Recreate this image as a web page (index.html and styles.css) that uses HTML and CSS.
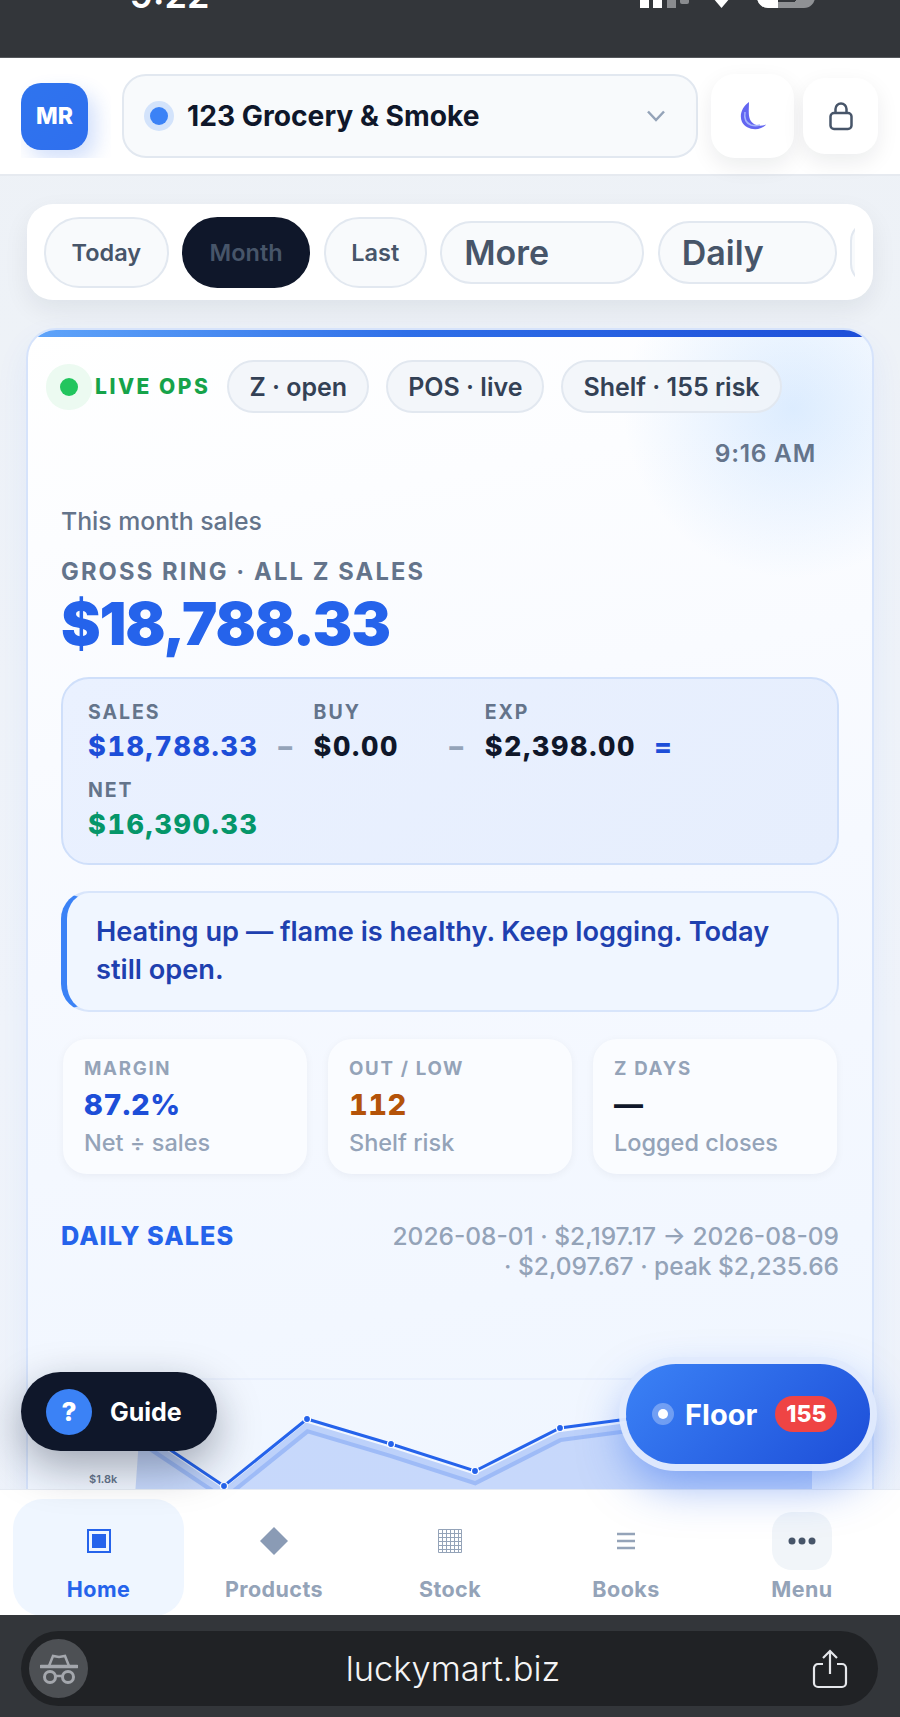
FILE: index.html
```html
<!DOCTYPE html>
<html lang="en">
<head>
    <meta charset="utf-8">
    <title>LuckyMart</title>
    <link rel="stylesheet" href="styles.css">
</head>
<body>
<div class="page">
    <div class="status">
        <div class="status-row">
            <span class="status-time">9:22</span>
            <svg class="status-icons" width="185" height="38" viewBox="0 0 185 38">
                <rect x="0" y="20" width="9" height="30" rx="2" fill="#fff"/>
                <rect x="13" y="14" width="9" height="30" rx="2" fill="#fff"/>
                <rect x="27" y="10" width="9" height="30" rx="2" fill="#8a8c8f"/>
                <rect x="40" y="4" width="9" height="30" rx="2" fill="#8a8c8f"/>
                <path d="M73 28h17l-8.500 10z" fill="#fff"/>
                <rect x="117" y="-8" width="58" height="46" rx="11" fill="#8f9194"/>
                <path d="M128 -8h10v46h-10a11 11 0 0 1-11-11v-24a11 11 0 0 1 11-11z" fill="#fff"/>
                <path d="M138 31h17M155 20v11M138 20h30" stroke="#33363a" stroke-width="2" fill="none"/>
            </svg>
        </div>
    </div>

    <header class="topbar">
        <div class="avatar-wrap"><div class="avatar">MR</div></div>
        <div class="store">
            <span class="store-dot"></span>
            <span class="store-name">123 Grocery &amp; Smoke</span>
            <svg class="store-caret" width="20" height="12" viewBox="0 0 20 12"><path d="M2 1.500l8 8.500 8-8.500" fill="none" stroke="#94a3b8" stroke-width="2.500"/></svg>
        </div>
        <div class="round-btn moon-btn">
            <svg width="32" height="32" viewBox="0 0 32 32">
                <path d="M12 2C5 7 2 15 5 22c3 6 12 9 19 6 2-.8 4-2 5-3.500-6 2.500-13 1-16-5-2-5-1-12-1-17.500z" fill="#6366f1"/>
                <path d="M8 12c-1 6 1 11 6 13 3 1 6 1 9 0" fill="none" stroke="#a5b4fc" stroke-width="1.500"/>
            </svg>
        </div>
        <div class="round-btn lock-btn">
            <svg width="26" height="30" viewBox="0 0 26 30">
                <rect x="2.500" y="12" width="21" height="16" rx="3.500" fill="none" stroke="#475569" stroke-width="2.500"/>
                <path d="M7.500 12V8a5.500 5.500 0 0 1 11 0v4" fill="none" stroke="#475569" stroke-width="2.500"/>
            </svg>
        </div>
    </header>

    <main class="content">
        <div class="periods">
            <nav class="period-track">
                <a class="period">Today</a>
                <a class="period period-on">Month</a>
                <a class="period">Last</a>
                <a class="period period-big period-more">More</a>
                <a class="period period-big period-daily">Daily</a>
                <a class="period period-cut"></a>
            </nav>
        </div>

        <section class="card">
            <div class="ops">
                <span class="live-dot"></span>
                <span class="live-text">LIVE OPS</span>
                <span class="chip">Z · open</span>
                <span class="chip">POS · live</span>
                <span class="chip">Shelf · 155 risk</span>
                <span class="ops-time">9:16 AM</span>
            </div>

            <p class="period-label">This month sales</p>
            <p class="gross-label">GROSS RING · ALL Z SALES</p>
            <p class="gross-value">$18,788.33</p>

            <div class="formula">
                <div class="term term-sales"><span class="term-label">SALES</span><b class="c-blue">$18,788.33</b></div>
                <span class="op">−</span>
                <div class="term term-buy"><span class="term-label">BUY</span><b>$0.00</b></div>
                <span class="op">−</span>
                <div class="term"><span class="term-label">EXP</span><b>$2,398.00</b></div>
                <span class="op c-blue">=</span>
                <div class="term term-sales"><span class="term-label">NET</span><b class="c-green">$16,390.33</b></div>
            </div>

            <div class="note">Heating up — flame is healthy. Keep logging. Today still open.</div>

            <div class="stats">
                <div class="stat"><span class="stat-label">MARGIN</span><b class="c-blue">87.2%</b><span class="stat-sub">Net ÷ sales</span></div>
                <div class="stat"><span class="stat-label">OUT / LOW</span><b class="c-amber">112</b><span class="stat-sub">Shelf risk</span></div>
                <div class="stat"><span class="stat-label">Z DAYS</span><b>—</b><span class="stat-sub">Logged closes</span></div>
            </div>

            <div class="chart-head">
                <h3>DAILY SALES</h3>
                <p>2026-08-01 · $2,197.17 → 2026-08-09 · $2,097.67 · peak $2,235.66</p>
            </div>

            <svg class="chart" width="778" height="240" viewBox="0 0 778 240">
                <path d="M0 95H778" stroke="#e6eefc" stroke-width="1.500"/>
                <polygon points="72,240 78,155 163,212 246,145 330,170 414,197 499,154 582,143 666,125 751,150 751,240" fill="#2563eb" opacity=".2"/>
                <polyline points="78,154 163,211 246,144 330,169 414,196 499,153 582,142 666,124 751,149" fill="none" stroke="#2563eb" stroke-width="10" opacity=".25"/>
                <polyline points="78,145 163,202 246,135 330,160 414,187 499,144 582,133 666,115 751,140" fill="none" stroke="#2563eb" stroke-width="3"/>
                <g fill="#2563eb" stroke="#fff" stroke-width="1.200">
                    <circle cx="163" cy="202" r="3.500"/>
                    <circle cx="246" cy="135" r="3.500"/>
                    <circle cx="330" cy="160" r="3.500"/>
                    <circle cx="414" cy="187" r="3.500"/>
                    <circle cx="499" cy="144" r="3.500"/>
                </g>
                <text class="axis" x="28" y="199">$1.8k</text>
            </svg>
        </section>
    </main>

    <a class="guide"><span class="guide-mark">?</span>Guide</a>
    <a class="floor"><span class="floor-dot"></span>Floor<span class="floor-badge">155</span></a>

    <footer class="tabs">
        <a class="tab tab-on">
            <span class="tab-icon"><svg width="24" height="24" viewBox="0 0 24 24"><rect x="1" y="1" width="22" height="22" fill="none" stroke="#2563eb" stroke-width="2"/><rect x="5" y="5" width="14" height="14" fill="#2563eb"/></svg></span>
            Home
        </a>
        <a class="tab">
            <span class="tab-icon"><svg width="30" height="28" viewBox="0 0 30 28"><path d="M15 0l14 14-14 14L1 14z" fill="#8a9bb5"/></svg></span>
            Products
        </a>
        <a class="tab">
            <span class="tab-icon"><svg width="24" height="24" viewBox="0 0 24 24"><path d="M.5.500h23v23H.5zM4.500 0v24M8.500 0v24M12.500 0v24M16.500 0v24M20.500 0v24M0 4.500h24M0 8.500h24M0 12.500h24M0 16.500h24M0 20.500h24" fill="none" stroke="#94a3b8" stroke-width="1"/></svg></span>
            Stock
        </a>
        <a class="tab">
            <span class="tab-icon"><svg width="20" height="18" viewBox="0 0 20 18"><path d="M1 2h18M1 9h18M1 16h18" stroke="#94a3b8" stroke-width="2.500"/></svg></span>
            Books
        </a>
        <a class="tab">
            <span class="tab-icon menu-bubble"><svg width="28" height="8" viewBox="0 0 28 8"><circle cx="4" cy="4" r="3.500" fill="#475569"/><circle cx="14" cy="4" r="3.500" fill="#475569"/><circle cx="24" cy="4" r="3.500" fill="#475569"/></svg></span>
            Menu
        </a>
    </footer>

    <div class="browser">
        <div class="urlbar">
            <span class="incognito">
                <svg width="38" height="32" viewBox="0 0 38 32">
                    <path d="M9 13l4-10 6 1 6-1 4 10" fill="none" stroke="#a4a7ad" stroke-width="2.500"/>
                    <path d="M1 13.500h36" stroke="#a4a7ad" stroke-width="3.500" stroke-linecap="round"/>
                    <circle cx="10" cy="24" r="5.500" fill="none" stroke="#a4a7ad" stroke-width="3"/>
                    <circle cx="28" cy="24" r="5.500" fill="none" stroke="#a4a7ad" stroke-width="3"/>
                    <path d="M15 23h8" stroke="#a4a7ad" stroke-width="2.500"/>
                </svg>
            </span>
            <span class="url">luckymart.biz</span>
            <svg class="share" width="36" height="40" viewBox="0 0 36 40">
                <path d="M11 15H6a4 4 0 0 0-4 4v15a4 4 0 0 0 4 4h24a4 4 0 0 0 4-4V19a4 4 0 0 0-4-4h-5" fill="none" stroke="#e5e7eb" stroke-width="2.200"/>
                <path d="M18 25V2M11 9l7-7 7 7" fill="none" stroke="#e5e7eb" stroke-width="2.200"/>
            </svg>
        </div>
    </div>
</div>
</body>
</html>
```

FILE: styles.css
```css
* {
    margin: 0;
    padding: 0;
    box-sizing: border-box;
}
html,body {
    height: 100%;
}
body {
    font-family: "Inter", "Noto Sans", sans-serif;
    color: #0f172a;
    overflow: hidden;
}
.page {
    position: relative;
    width: 900px;
    height: 1717px;
    display: flex;
    flex-direction: column;
    background: linear-gradient(180deg, #edf1f6 0%, #f0f4fa 60%, #eef3fb 100%);
    overflow: hidden;
}

/* phone chrome */
.status {
    flex: none;
    height: 58px;
    background: #33363a;
    border-bottom: 1px solid #55585c;
    overflow: hidden;
}
.status-row {
    display: flex;
    justify-content: space-between;
    height: 38px;
    margin-top: -30px;
    padding: 0 75px 0 130px;
}
.status-time {
    font-size: 36px;
    line-height: 50px;
    font-weight: 600;
    color: #fff;
}
.status-icons {
    margin-left: auto;
}

/* top bar */
.topbar {
    flex: none;
    height: 118px;
    display: flex;
    align-items: center;
    padding: 0 22px 0 21px;
    background: #fff;
    border-bottom: 2px solid #e6eaf0;
}
.avatar-wrap {
    flex: none;
    width: 90px;
    height: 84px;
    padding-top: 9px;
    overflow: hidden;
}
.avatar {
    width: 67px;
    height: 67px;
    border-radius: 20px;
    background: linear-gradient(135deg, #2f74ee, #2f6fee);
    box-shadow: 8px 10px 20px rgba(37,99,235,.2);
    color: #fff;
    font-size: 23px;
    font-weight: 800;
    line-height: 67px;
    text-align: center;
}
.store {
    width: 578px;
    height: 84px;
    margin-left: 11px;
    display: flex;
    align-items: center;
    padding: 0 30px 0 20px;
    background: #f8fafc;
    border: 2px solid #e2e8f0;
    border-radius: 24px;
}
.store-dot {
    width: 18px;
    height: 18px;
    margin: 0 6px;
    border-radius: 50%;
    background: #3b82f6;
    box-shadow: 0 0 0 6px #d3e3fb;
}
.store-name {
    margin-left: 13px;
    font-size: 28.200px;
    font-weight: 700;
    flex: 1;
}
.round-btn {
    display: flex;
    align-items: center;
    justify-content: center;
    background: #fff;
    box-shadow: 0 8px 22px rgba(15,23,42,.08);
}
.moon-btn {
    width: 83px;
    height: 84px;
    margin-left: 13px;
    border-radius: 24px;
}
.lock-btn {
    width: 75px;
    height: 76px;
    margin-left: 9px;
    border-radius: 22px;
}

/* content */
.content {
    flex: 1;
    min-height: 0;
    overflow: hidden;
    padding: 28px 26px 0;
}
.periods {
    height: 96px;
    margin: 0 1px;
    display: flex;
    align-items: center;
    padding: 0 18px 0 17px;
    background: #fff;
    border-radius: 26px;
    box-shadow: 0 10px 26px rgba(15,23,42,.07);
}
.period-track {
    flex: 1;
    min-width: 0;
    display: flex;
    align-items: center;
    gap: 13.500px;
    overflow: hidden;
}
.period {
    flex: none;
    height: 71px;
    padding: 0 25.500px;
    display: flex;
    align-items: center;
    background: #f8fafc;
    border: 2px solid #e2e8f0;
    border-radius: 36px;
    color: #475569;
    font-size: 23.500px;
    font-weight: 600;
}
.period-on {
    background: #0f172a;
    border-color: #0f172a;
}
.period-big {
    height: 63px;
    padding: 0 22px;
    font-size: 34px;
    border-radius: 32px;
}
.period-more {
    width: 204px;
}
.period-daily {
    width: 179px;
}
.period-cut {
    width: 40px;
    height: 63px;
    padding: 0;
}

.card {
    position: relative;
    margin-top: 28px;
    height: 1300px;
    padding: 30px 33px 0;
    background:
        radial-gradient(circle 170px at 765px 78px, rgba(147,197,253,.3), rgba(147,197,253,0)),
        linear-gradient(170deg, #ffffff 0%, #f6f9ff 45%, #eef5ff 100%);
    border: 2px solid #d6e3fb;
    border-radius: 30px;
    box-shadow: 0 14px 34px rgba(37,99,235,.07);
    overflow: hidden;
}
.card::before {
    content: "";
    position: absolute;
    left: 0;
    right: 0;
    top: 0;
    height: 7px;
    background: linear-gradient(90deg, #60a5fa, #2f6fe8 45%, #1d4ed8);
}
.ops {
    display: flex;
    flex-wrap: wrap;
    align-items: center;
    margin-left: -15px;
}
.live-dot {
    width: 18px;
    height: 18px;
    margin: 0 14px;
    border-radius: 50%;
    background: #22c55e;
    box-shadow: 0 0 0 14px #ecfaf1;
}
.live-text {
    margin-left: 3px;
    margin-right: 17px;
    color: #16a34a;
    font-size: 21px;
    font-weight: 800;
    letter-spacing: .12em;
}
.chip {
    height: 53px;
    margin-right: 17px;
    padding: 0 20px;
    display: flex;
    align-items: center;
    background: rgba(241,245,249,.85);
    border: 2px solid #e2e8f0;
    border-radius: 27px;
    color: #334155;
    font-size: 25px;
    font-weight: 600;
}
.ops-time {
    width: 100%;
    margin-top: 25px;
    padding-right: 23px;
    text-align: right;
    color: #64748b;
    font-size: 24.500px;
    font-weight: 600;
    letter-spacing: .03em;
    line-height: 30px;
}
.period-label {
    margin-top: 38px;
    color: #64748b;
    font-size: 24.800px;
    font-weight: 500;
    line-height: 30px;
}
.gross-label {
    margin-top: 21px;
    color: #64748b;
    font-size: 23.700px;
    font-weight: 700;
    letter-spacing: .09em;
    line-height: 30px;
}
.gross-value {
    margin-top: 4px;
    color: #2563eb;
    font-size: 59.500px;
    font-weight: 900;
    letter-spacing: -.02em;
    line-height: 64px;
}
.formula {
    margin-top: 22px;
    height: 188px;
    display: flex;
    flex-wrap: wrap;
    align-content: flex-start;
    column-gap: 18px;
    row-gap: 8px;
    padding: 18px 25px;
    background: linear-gradient(135deg, #eaf1ff, #e6eefd);
    border: 2px solid #cfdffa;
    border-radius: 28px;
}
.term {
    display: flex;
    flex-direction: column;
}
.term-buy {
    width: 116px;
}
.term-label {
    color: #64748b;
    font-size: 19.500px;
    font-weight: 700;
    letter-spacing: .1em;
    line-height: 30px;
}
.term b,.op {
    font-size: 27px;
    font-weight: 800;
    font-variant-numeric: tabular-nums;
    letter-spacing: .06em;
    line-height: 40px;
}
.op {
    margin-top: 30px;
    color: #94a3b8;
}
.c-blue {
    color: #1d4ed8;
}
.c-green {
    color: #059669;
}
.c-amber {
    color: #b45309;
}
.note {
    margin-top: 26px;
    height: 121px;
    padding: 20px 29px;
    background: #f0f6ff;
    border: 2px solid #d8e5fb;
    border-left: 6px solid #3b82f6;
    border-radius: 28px;
    color: #1e40af;
    font-size: 27.200px;
    font-weight: 600;
    line-height: 38px;
}
.stats {
    display: grid;
    grid-template-columns: repeat(3, 1fr);
    gap: 21px;
    margin: 27px 2px 0;
}
.stat {
    height: 135px;
    padding: 16px 21px;
    display: flex;
    flex-direction: column;
    background: #fafcff;
    border-radius: 24px;
    box-shadow: 0 2px 8px rgba(15,23,42,.05);
}
.stat-label {
    color: #94a3b8;
    font-size: 18.700px;
    font-weight: 700;
    letter-spacing: .09em;
    line-height: 28px;
}
.stat b {
    font-size: 29px;
    font-weight: 800;
    font-variant-numeric: tabular-nums;
    letter-spacing: .02em;
    line-height: 44px;
}
.stat-sub {
    color: #94a3b8;
    font-size: 23.500px;
    font-weight: 500;
    line-height: 32px;
}
.chart-head {
    display: flex;
    justify-content: space-between;
    margin-top: 47px;
}
.chart-head h3 {
    color: #2563eb;
    font-size: 25.300px;
    font-weight: 800;
    letter-spacing: .04em;
    line-height: 30px;
}
.chart-head p {
    width: 450px;
    text-align: right;
    color: #94a3b8;
    font-size: 24.500px;
    font-weight: 500;
    line-height: 30px;
}
.chart {
    display: block;
    margin-top: 3px;
}
.axis {
    fill: #64748b;
    font-size: 11px;
    font-weight: 600;
}

/* floating buttons */
.guide {
    position: absolute;
    z-index: 5;
    left: 21px;
    bottom: 266px;
    width: 196px;
    height: 79px;
    display: flex;
    align-items: center;
    gap: 18px;
    padding-left: 25px;
    background: #0f172a;
    border-radius: 40px;
    box-shadow: 0 16px 44px rgba(15,23,42,.36);
    color: #fff;
    font-size: 25px;
    font-weight: 700;
}
.guide-mark {
    width: 46px;
    height: 46px;
    background: #3b82f6;
    border-radius: 50%;
    font-size: 26px;
    font-weight: 800;
    line-height: 46px;
    text-align: center;
}
.floor {
    position: absolute;
    z-index: 5;
    left: 626px;
    bottom: 253px;
    width: 244px;
    height: 100px;
    display: flex;
    align-items: center;
    padding-left: 32px;
    background: linear-gradient(135deg, #3b82f6, #1d4ed8);
    border-radius: 50px;
    box-shadow: 0 0 0 7px rgba(224,234,253,.95), 0 20px 46px rgba(37,99,235,.5);
    color: #fff;
    font-size: 29px;
    font-weight: 700;
}
.floor-dot {
    width: 10px;
    height: 10px;
    margin-right: 17px;
    background: #fff;
    border-radius: 50%;
    box-shadow: 0 0 0 6px rgba(255,255,255,.3);
}
.floor-badge {
    height: 36px;
    margin-left: 18px;
    padding: 0 11px;
    background: #ef4444;
    border-radius: 18px;
    font-size: 23px;
    font-weight: 800;
    line-height: 36px;
}

/* bottom tabs */
.tabs {
    flex: none;
    height: 126px;
    display: grid;
    grid-template-columns: repeat(5, 176px);
    padding: 9px 10px 0;
    background: rgba(255,255,255,.97);
    border-top: 1px solid #e6ebf3;
}
.tab {
    display: flex;
    flex-direction: column;
    align-items: center;
    color: #94a3b8;
    font-size: 21.500px;
    font-weight: 700;
    letter-spacing: .02em;
}
.tab-icon {
    height: 58px;
    margin-top: 13px;
    margin-bottom: 6px;
    display: flex;
    align-items: center;
    justify-content: center;
}
.tab-on {
    width: 171px;
    height: 117px;
    margin-left: 3px;
    background: #eff6ff;
    border-radius: 30px;
    color: #2563eb;
}
.menu-bubble {
    width: 60px;
    background: #f1f5f9;
    border-radius: 20px;
}

/* browser bar */
.browser {
    position: relative;
    z-index: 6;
    flex: none;
    height: 102px;
    padding: 16px 22px 0 21px;
    background: #33363a;
}
.urlbar {
    height: 75px;
    display: flex;
    align-items: center;
    padding: 0 30px 0 8px;
    background: #202225;
    border-radius: 38px;
}
.incognito {
    width: 59px;
    height: 59px;
    display: flex;
    align-items: center;
    justify-content: center;
    background: #4d5054;
    border-radius: 50%;
}
.url {
    flex: 1;
    margin-left: 6px;
    text-align: center;
    color: #f4f4f5;
    font-size: 34.500px;
    font-weight: 300;
}
```
